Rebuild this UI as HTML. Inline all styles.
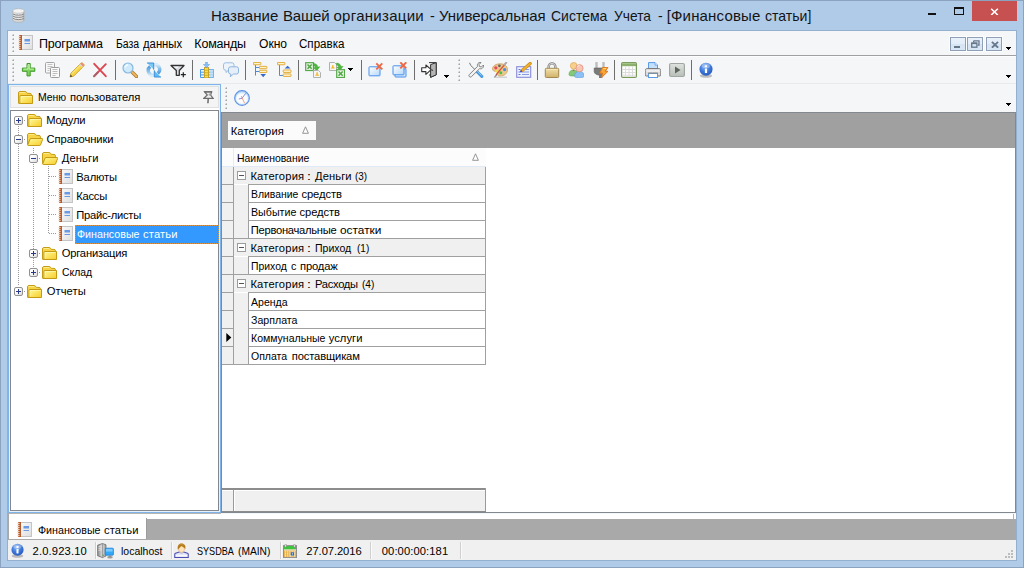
<!DOCTYPE html>
<html>
<head>
<meta charset="utf-8">
<title>USU</title>
<style>
*{box-sizing:border-box;margin:0;padding:0}
html,body{width:1024px;height:568px;overflow:hidden}
body{background:#afcbe8;font-family:"Liberation Sans",sans-serif;font-size:11px;color:#000;position:relative}
.abs{position:absolute;display:block}
.t{position:absolute;white-space:nowrap;line-height:1}
</style>
</head>
<body>
<div class="abs" style="left:0px;top:0px;width:1024px;height:568px;background:#afcbe8;border:1px solid #8ba3bf;"></div>
<div class="abs" style="left:7px;top:30px;width:1010px;height:531px;background:#94b0d0;"></div>
<div class="abs" style="left:8px;top:31px;width:1008px;height:529px;background:#f5f6f7;"></div>
<div class="t" style="left:210.90px;top:7.90px;font-size:15px;letter-spacing:0.059px;color:#141414;">Название</div>
<div class="t" style="left:283.00px;top:7.90px;font-size:15px;letter-spacing:-0.131px;color:#141414;">Вашей</div>
<div class="t" style="left:333.50px;top:7.90px;font-size:15px;letter-spacing:0.278px;color:#141414;">организации</div>
<div class="t" style="left:430.00px;top:7.90px;font-size:15px;letter-spacing:0.000px;color:#141414;transform:scaleX(0.9600);transform-origin:0 0;">-</div>
<div class="t" style="left:439.00px;top:7.90px;font-size:15px;letter-spacing:-0.037px;color:#141414;">Универсальная</div>
<div class="t" style="left:551.40px;top:7.90px;font-size:15px;letter-spacing:0.000px;color:#141414;transform:scaleX(0.9318);transform-origin:0 0;">Система</div>
<div class="t" style="left:613.50px;top:7.90px;font-size:15px;letter-spacing:0.000px;color:#141414;transform:scaleX(0.9195);transform-origin:0 0;">Учета</div>
<div class="t" style="left:657.60px;top:7.90px;font-size:15px;letter-spacing:0.000px;color:#141414;transform:scaleX(0.9400);transform-origin:0 0;">-</div>
<div class="t" style="left:666.70px;top:7.90px;font-size:15px;letter-spacing:0.168px;color:#141414;">[Финансовые</div>
<div class="t" style="left:765.40px;top:7.90px;font-size:15px;letter-spacing:0.000px;color:#141414;transform:scaleX(0.9375);transform-origin:0 0;">статьи]</div>
<svg class="abs" style="left:12px;top:7.500px" width="13" height="15" viewBox="0 0 13 15"><ellipse cx="6.500" cy="12" rx="5.800" ry="2.300" fill="#d8d8d8" stroke="#a8a8a8" stroke-width=".6"/><rect x=".700" y="3" width="11.600" height="9" fill="#e8e8e8"/><path d="M.700 3v9M12.300 3v9" stroke="#a8a8a8" stroke-width=".6"/><path d="M1 6c2 1.600 9 1.600 11 0M1 8.200c2 1.600 9 1.600 11 0M1 10.400c2 1.600 9 1.600 11 0" stroke="#7c7c7c" stroke-width=".9" fill="none"/><path d="M11.300 4v8.500" stroke="#9a9a9a" stroke-width="1.400" opacity=".6"/><ellipse cx="6.500" cy="3" rx="5.800" ry="2.300" fill="#f4f4f4" stroke="#b0b0b0" stroke-width=".6"/></svg>
<div class="abs" style="left:972px;top:1px;width:45px;height:20px;background:#c75050;"></div>
<svg class="abs" style="left:990px;top:7.500px" width="9" height="7.800" viewBox="0 0 11 10"><path d="M1.200 1l8.600 8M9.800 1L1.200 9" stroke="#fff" stroke-width="2"/></svg>
<div class="abs" style="left:928px;top:13px;width:8px;height:2px;background:#111;"></div>
<div class="abs" style="left:954px;top:7px;width:10px;height:8px;border:1px solid #111;border-top-width:2px;"></div>
<div class="abs" style="left:8px;top:55px;width:1008px;height:1px;background:#a0a0a0;"></div>
<div class="abs" style="left:8px;top:56px;width:1008px;height:1px;background:#fdfdfd;"></div>
<div class="abs" style="left:8px;top:83px;width:1008px;height:1px;background:#e9eaeb;"></div>
<div class="abs" style="left:13px;top:35px;width:1px;height:1px;background:#a4a4a4;"></div>
<div class="abs" style="left:12px;top:34px;width:1px;height:1px;background:#e6e6e6;"></div>
<div class="abs" style="left:13px;top:34px;width:1px;height:1px;background:#c6c6c6;"></div>
<div class="abs" style="left:12px;top:35px;width:1px;height:1px;background:#c6c6c6;"></div>
<div class="abs" style="left:13px;top:39px;width:1px;height:1px;background:#a4a4a4;"></div>
<div class="abs" style="left:12px;top:38px;width:1px;height:1px;background:#e6e6e6;"></div>
<div class="abs" style="left:13px;top:38px;width:1px;height:1px;background:#c6c6c6;"></div>
<div class="abs" style="left:12px;top:39px;width:1px;height:1px;background:#c6c6c6;"></div>
<div class="abs" style="left:13px;top:43px;width:1px;height:1px;background:#a4a4a4;"></div>
<div class="abs" style="left:12px;top:42px;width:1px;height:1px;background:#e6e6e6;"></div>
<div class="abs" style="left:13px;top:42px;width:1px;height:1px;background:#c6c6c6;"></div>
<div class="abs" style="left:12px;top:43px;width:1px;height:1px;background:#c6c6c6;"></div>
<div class="abs" style="left:13px;top:47px;width:1px;height:1px;background:#a4a4a4;"></div>
<div class="abs" style="left:12px;top:46px;width:1px;height:1px;background:#e6e6e6;"></div>
<div class="abs" style="left:13px;top:46px;width:1px;height:1px;background:#c6c6c6;"></div>
<div class="abs" style="left:12px;top:47px;width:1px;height:1px;background:#c6c6c6;"></div>
<div class="abs" style="left:13px;top:51px;width:1px;height:1px;background:#a4a4a4;"></div>
<div class="abs" style="left:12px;top:50px;width:1px;height:1px;background:#e6e6e6;"></div>
<div class="abs" style="left:13px;top:50px;width:1px;height:1px;background:#c6c6c6;"></div>
<div class="abs" style="left:12px;top:51px;width:1px;height:1px;background:#c6c6c6;"></div>
<svg class="abs" style="left:18px;top:35px" width="15" height="15" viewBox="0 0 15 15"><defs><linearGradient id="dg" x1="0" y1="0" x2="1" y2="1"><stop offset="0" stop-color="#fafafa"/><stop offset="1" stop-color="#dedede"/></linearGradient></defs><rect x="3.500" y=".500" width="11" height="14" fill="url(#dg)" stroke="#c4c4c4"/><rect x="1.200" y="0" width="2.600" height="15" fill="#c2602c"/><path d="M3.300 0v15" stroke="#a84c1c" stroke-width=".7"/><path d="M.2 1.500h2.400M.2 3.500h2.400M.2 5.500h2.400M.2 7.500h2.400M.2 9.500h2.400M.2 11.500h2.400M.2 13.500h2.400" stroke="#f0dccc" stroke-width=".9"/><rect x="6.500" y="4" width="5.500" height="2.500" fill="#6a9ae4"/><rect x="6.500" y="8" width="5.500" height="1" fill="#6a9ae4"/></svg>
<div class="t" style="left:39.00px;top:38.42px;font-size:12.5px;letter-spacing:-0.192px;color:#000;">Программа</div>
<div class="t" style="left:115.56px;top:38.42px;font-size:12.5px;letter-spacing:0.000px;color:#000;transform:scaleX(0.8375);transform-origin:0 0;">База</div>
<div class="t" style="left:143.00px;top:38.42px;font-size:12.5px;letter-spacing:0.000px;color:#000;transform:scaleX(0.9038);transform-origin:0 0;">данных</div>
<div class="t" style="left:194.30px;top:38.42px;font-size:12.5px;letter-spacing:-0.196px;color:#000;">Команды</div>
<div class="t" style="left:258.60px;top:38.42px;font-size:12.5px;letter-spacing:0.000px;color:#000;transform:scaleX(0.9658);transform-origin:0 0;">Окно</div>
<div class="t" style="left:299.30px;top:38.42px;font-size:12.5px;letter-spacing:0.000px;color:#000;transform:scaleX(0.9270);transform-origin:0 0;">Справка</div>
<div class="abs" style="left:950px;top:37px;width:16px;height:14px;background:#dbe8f5;border:1px solid #8fa0b6;background:linear-gradient(#e9f1fa 0,#e3edf8 50%,#d6e4f4 50%,#d9e6f5 100%);box-shadow:0 0 0 1px #fcfdfe;"></div>
<div class="abs" style="left:967px;top:37px;width:16px;height:14px;background:#dbe8f5;border:1px solid #8fa0b6;background:linear-gradient(#e9f1fa 0,#e3edf8 50%,#d6e4f4 50%,#d9e6f5 100%);box-shadow:0 0 0 1px #fcfdfe;"></div>
<div class="abs" style="left:986px;top:37px;width:16px;height:14px;background:#dbe8f5;border:1px solid #8fa0b6;background:linear-gradient(#e9f1fa 0,#e3edf8 50%,#d6e4f4 50%,#d9e6f5 100%);box-shadow:0 0 0 1px #fcfdfe;"></div>
<div class="abs" style="left:954px;top:46px;width:6px;height:2px;background:#66778a;"></div>
<svg class="abs" style="left:971px;top:40px" width="9" height="8" viewBox="0 0 9 8"><path d="M2.600 .800h5.400v4.300h-1.200M2.600 .800v1.500" stroke="#66778a" stroke-width="1.300" fill="none"/><rect x=".700" y="3" width="5.200" height="4.200" fill="none" stroke="#66778a" stroke-width="1.300"/><path d="M.7 3.400h5.200" stroke="#66778a" stroke-width="1.400"/></svg>
<svg class="abs" style="left:990.500px;top:40.500px" width="8" height="7.500" viewBox="0 0 9 8"><path d="M1 .700l7 6.600M8 .700L1 7.300" stroke="#66778a" stroke-width="2.100"/></svg>
<div class="abs" style="left:1006px;top:47px;width:5px;height:1px;background:#000;"></div>
<div class="abs" style="left:1007px;top:48px;width:3px;height:1px;background:#000;"></div>
<div class="abs" style="left:1008px;top:49px;width:1px;height:1px;background:#000;"></div>
<div class="abs" style="left:13px;top:60px;width:1px;height:1px;background:#a4a4a4;"></div>
<div class="abs" style="left:12px;top:59px;width:1px;height:1px;background:#e6e6e6;"></div>
<div class="abs" style="left:13px;top:59px;width:1px;height:1px;background:#c6c6c6;"></div>
<div class="abs" style="left:12px;top:60px;width:1px;height:1px;background:#c6c6c6;"></div>
<div class="abs" style="left:13px;top:64px;width:1px;height:1px;background:#a4a4a4;"></div>
<div class="abs" style="left:12px;top:63px;width:1px;height:1px;background:#e6e6e6;"></div>
<div class="abs" style="left:13px;top:63px;width:1px;height:1px;background:#c6c6c6;"></div>
<div class="abs" style="left:12px;top:64px;width:1px;height:1px;background:#c6c6c6;"></div>
<div class="abs" style="left:13px;top:68px;width:1px;height:1px;background:#a4a4a4;"></div>
<div class="abs" style="left:12px;top:67px;width:1px;height:1px;background:#e6e6e6;"></div>
<div class="abs" style="left:13px;top:67px;width:1px;height:1px;background:#c6c6c6;"></div>
<div class="abs" style="left:12px;top:68px;width:1px;height:1px;background:#c6c6c6;"></div>
<div class="abs" style="left:13px;top:72px;width:1px;height:1px;background:#a4a4a4;"></div>
<div class="abs" style="left:12px;top:71px;width:1px;height:1px;background:#e6e6e6;"></div>
<div class="abs" style="left:13px;top:71px;width:1px;height:1px;background:#c6c6c6;"></div>
<div class="abs" style="left:12px;top:72px;width:1px;height:1px;background:#c6c6c6;"></div>
<div class="abs" style="left:13px;top:76px;width:1px;height:1px;background:#a4a4a4;"></div>
<div class="abs" style="left:12px;top:75px;width:1px;height:1px;background:#e6e6e6;"></div>
<div class="abs" style="left:13px;top:75px;width:1px;height:1px;background:#c6c6c6;"></div>
<div class="abs" style="left:12px;top:76px;width:1px;height:1px;background:#c6c6c6;"></div>
<div class="abs" style="left:13px;top:80px;width:1px;height:1px;background:#a4a4a4;"></div>
<div class="abs" style="left:12px;top:79px;width:1px;height:1px;background:#e6e6e6;"></div>
<div class="abs" style="left:13px;top:79px;width:1px;height:1px;background:#c6c6c6;"></div>
<div class="abs" style="left:12px;top:80px;width:1px;height:1px;background:#c6c6c6;"></div>
<svg class="abs" style="left:21px;top:62px" width="16" height="16" viewBox="0 0 16 16"><path d="M6 1.500h3.200v4.600h4.600v3.200H9.200v4.600H6V9.300H1.400V6.100H6z" fill="#7fd35c" stroke="#3d9a2a" stroke-width="1" stroke-linejoin="round"/><path d="M7 2.500h1.200v4.600h4.600M2.500 7.100h4.500v-4" stroke="#c4f2ac" stroke-width="1" fill="none"/></svg>
<svg class="abs" style="left:45px;top:62px" width="16" height="16" viewBox="0 0 16 16"><rect x=".500" y=".500" width="9" height="10.500" rx="1" fill="#f8f8f8" stroke="#a4a4a4"/><path d="M2.500 2.500h5M2.500 4.500h5M2.500 6.500h3M2.500 8.500h2" stroke="#bcbcbc" stroke-width=".9"/><rect x="5.500" y="5.500" width="9" height="10" rx="1" fill="#fafafa" stroke="#9c9c9c"/><path d="M7.500 7.500h5M7.500 9.500h5M7.500 11.500h5M7.500 13.500h3" stroke="#b4b4b4" stroke-width=".9"/></svg>
<svg class="abs" style="left:69px;top:62px" width="16" height="16" viewBox="0 0 16 16"><path d="M1 15l1-3.8L11.8 1.3c.6-.6 1.4-.6 2 0l.9.9c.6.6.6 1.4 0 2L4.8 14z" fill="#f7d548" stroke="#c9a227" stroke-width=".9"/><path d="M3 11.5L12 2.5" stroke="#fff0a0" stroke-width="1"/><path d="M11.3 1.8l2.9 2.9 .6-.6c.5-.6.5-1.3 0-1.9l-.9-.9c-.6-.5-1.3-.5-1.9 0z" fill="#f08a8a"/><path d="M10.6 2.5l2.9 2.9" stroke="#d8d8d8" stroke-width="1.2"/><path d="M1 15l.6-2.4 1.8 1.8z" fill="#444"/></svg>
<svg class="abs" style="left:92px;top:62px" width="16" height="16" viewBox="0 0 16 16"><path d="M2.200 1.800L13.800 14.200M13.800 2.200L2.200 14.200" stroke="#dc4652" stroke-width="1.900" stroke-linecap="round"/><path d="M2.200 14.200l3.500-3.700" stroke="#a8606a" stroke-width="1.900" stroke-linecap="round"/></svg>
<svg class="abs" style="left:122px;top:62px" width="16" height="16" viewBox="0 0 16 16"><path d="M9.5 9.5L14.5 14.5" stroke="#b07830" stroke-width="3.4" stroke-linecap="round"/><path d="M10.2 10.2L14.4 14.4" stroke="#f0b860" stroke-width="1.8" stroke-linecap="round"/><circle cx="6" cy="6" r="5" fill="#cfeafa" stroke="#86b8e0" stroke-width="1.2"/><path d="M3 5.5a3.2 3.2 0 0 1 3-2.7" stroke="#fff" stroke-width="1.3" fill="none"/></svg>
<svg class="abs" style="left:146px;top:62px" width="16" height="16" viewBox="0 0 16 16"><defs><linearGradient id="rf1" x1="0" y1="1" x2="0" y2="0"><stop offset="0" stop-color="#d8ecfa"/><stop offset=".45" stop-color="#8cc2ec"/><stop offset="1" stop-color="#4f9bdc"/></linearGradient><linearGradient id="rf2" x1="0" y1="0" x2="0" y2="1"><stop offset="0" stop-color="#d8ecfa"/><stop offset=".45" stop-color="#8cc2ec"/><stop offset="1" stop-color="#4f9bdc"/></linearGradient></defs><path d="M8 13.400A4.900 4.900 0 0 1 4.200 4.700" fill="none" stroke="url(#rf1)" stroke-width="3.400"/><path d="M8 2.600A4.900 4.900 0 0 1 11.800 11.300" fill="none" stroke="url(#rf2)" stroke-width="3.400"/><path d="M1.200 1H7.700V7.500Z" fill="#78c8f8"/><path d="M1 1H7.700V7.600" fill="none" stroke="#3f8fd6" stroke-width="1"/><path d="M14.800 15H8.300V8.500Z" fill="#5cbcf6"/><path d="M15 15H8.300V8.400" fill="none" stroke="#3f8fd6" stroke-width="1"/></svg>
<svg class="abs" style="left:170px;top:62px" width="16" height="16" viewBox="0 0 16 16"><path d="M1 3.5h13L9.3 8.5v4.8H6.3V8.5z" fill="#d8dde2" stroke="#333" stroke-width="1.3" stroke-linejoin="round"/><path d="M3 4.5h6l-2 2z" fill="#fff" opacity=".7"/><path d="M13.3 10.2v5M10.8 12.7h5" stroke="#222" stroke-width="1.2"/></svg>
<svg class="abs" style="left:199px;top:62px" width="16" height="16" viewBox="0 0 16 16"><path d="M1.5 7.5h13v8h-13zM1.5 10.2h13M1.5 12.9h13" fill="#eaf4ff" stroke="#4a9ae8"/><rect x="10.5" y="7.5" width="4" height="8" fill="#b8dcf8" opacity=".8"/><rect x="5.5" y="5.5" width="4" height="10.4" fill="#f8e048" stroke="#c9a227"/><path d="M5.5 8.2h4M5.5 10.8h4M5.5 13.4h4" stroke="#c9a227" stroke-width=".8"/><path d="M6.6 0h1.8v2.5h2.2L7.5 5.5 4.4 2.5h2.2z" fill="#8cc0f0" stroke="#5a9ae0" stroke-width=".5"/></svg>
<svg class="abs" style="left:223px;top:62px" width="16" height="16" viewBox="0 0 16 16"><path d="M2.5.8h6.5a2 2 0 0 1 2 2v3.4a2 2 0 0 1-2 2H5.5L3 10.5V8.2H2.5a2 2 0 0 1-2-2V2.8a2 2 0 0 1 2-2z" fill="#eef4fb" stroke="#9bbde2" stroke-width="1"/><path d="M7.5 4.8h6a2 2 0 0 1 2 2v3.2a2 2 0 0 1-2 2H10.5L7.2 14.8l.8-2.8H7.5a2 2 0 0 1-2-2V6.8a2 2 0 0 1 2-2z" fill="#e6eef9" stroke="#8fb4de" stroke-width="1"/></svg>
<svg class="abs" style="left:253px;top:62px" width="16" height="16" viewBox="0 0 16 16"><path d="M2.500 3v10.500M2.500 5.500h4M2.500 9.500h4" stroke="#4a8ad8" stroke-width="1" fill="none"/><rect x=".450" y=".450" width="7.400" height="2.300" rx=".5" fill="#fff3cc" stroke="#dfa62e" stroke-width=".9"/><rect x="6.450" y="4.350" width="7.400" height="2.300" rx=".5" fill="#fff3cc" stroke="#dfa62e" stroke-width=".9"/><rect x="6.450" y="8.250" width="7.400" height="2.300" rx=".5" fill="#fff3cc" stroke="#dfa62e" stroke-width=".9"/><path d="M7.400 12h5.600l-2.800 3.200z" fill="#3a6ac8"/></svg>
<svg class="abs" style="left:277px;top:62px" width="16" height="16" viewBox="0 0 16 16"><path d="M2.500 3v10.500h3.500" stroke="#4a8ad8" stroke-width="1" fill="none"/><rect x=".450" y=".450" width="7.400" height="2.300" rx=".5" fill="#fff3cc" stroke="#dfa62e" stroke-width=".9"/><path d="M7.600 6.600h6l-3-2.900z" fill="#3a6ac8"/><rect x="6.200" y="7.950" width="7.800" height="2.500" rx=".5" fill="#fff3cc" stroke="#dfa62e" stroke-width=".9"/><rect x="6.200" y="11.950" width="7.800" height="2.500" rx=".5" fill="#fff3cc" stroke="#dfa62e" stroke-width=".9"/></svg>
<svg class="abs" style="left:305px;top:62px" width="16" height="16" viewBox="0 0 16 16"><rect x=".7" y=".7" width="7.8" height="7.8" fill="#eaf6e6" stroke="#55a84a" stroke-width="1.2"/><path d="M2.5 2.5l4.2 4.2M6.7 2.5L2.5 6.7" stroke="#55a84a" stroke-width="1.6"/><path d="M8.5 1.5c2.5 0 4 1.5 4.3 3.5l2-.3-3 4-3.4-3 2 -.3c-.3-1-1-1.7-2.4-1.9z" fill="#4cb83c" stroke="#3a9a2c" stroke-width=".4"/><path d="M8.5 8.5h5l2 2V15.5h-7z" fill="#f6f6f6" stroke="#b0b0b0"/><path d="M10 13.8h4.2l-.8-1.4h-.6v-1.6a.7.7 0 0 0-1.4 0v1.6h-.6z" fill="#f2b820"/></svg>
<svg class="abs" style="left:329px;top:62px" width="16" height="16" viewBox="0 0 16 16"><path d="M.5.5h5l2 2V8.5h-7z" fill="#f6f6f6" stroke="#b0b0b0"/><path d="M1.7 6.6h4.2l-.8-1.4h-.6V3.6a.7.7 0 0 0-1.4 0v1.6h-.6z" fill="#f2b820"/><path d="M7.5 1c2.5 0 4.2 1.5 4.6 3.6l2-.3-3 4-3.4-3 2-.3c-.3-1-1-1.9-2.2-2.1z" fill="#4cb83c" stroke="#3a9a2c" stroke-width=".4"/><rect x="7.7" y="7.7" width="7.8" height="7.8" fill="#eaf6e6" stroke="#55a84a" stroke-width="1.2"/><path d="M9.5 9.5l4.2 4.2M13.7 9.5l-4.2 4.2" stroke="#55a84a" stroke-width="1.6"/></svg>
<svg class="abs" style="left:368px;top:62px" width="16" height="16" viewBox="0 0 16 16"><defs><linearGradient id="wg" x1="0" y1="0" x2="1" y2="1"><stop offset="0" stop-color="#fff"/><stop offset="1" stop-color="#b4d8fa"/></linearGradient></defs><rect x="1" y="4.800" width="11" height="9" rx=".6" fill="url(#wg)" stroke="#4890ea" stroke-width="1"/><path d="M8.3 1.3l6 6M14.3 1.3l-6 6" stroke="#ea6a48" stroke-width="1.9"/></svg>
<svg class="abs" style="left:392px;top:62px" width="16" height="16" viewBox="0 0 16 16"><rect x="3" y="7" width="11" height="8" rx=".6" fill="#d4e8fc" stroke="#4890ea" stroke-width="1"/><rect x="1" y="3.800" width="11" height="9" rx=".6" fill="url(#wg)" stroke="#4890ea" stroke-width="1"/><path d="M8.3.3l6 6M14.3.3l-6 6" stroke="#ea6a48" stroke-width="1.9"/></svg>
<svg class="abs" style="left:421px;top:62px" width="16" height="16" viewBox="0 0 16 16"><path d="M8 .6h7.2v12.2L9.6 15.3V13H8" fill="#f4f4f4" stroke="#333" stroke-width="1"/><path d="M9.6 2.6L15.2.6v12.2L9.6 15.3z" fill="#b4b4b4" stroke="#333" stroke-width="1"/><path d="M.7 5.8h4.2V3l5.3 4.7-5.3 4.7V9.6H.7z" fill="#fff" stroke="#333" stroke-width="1.1" stroke-linejoin="round"/><circle cx="11.3" cy="8.2" r=".8" fill="#444"/></svg>
<svg class="abs" style="left:468px;top:62px" width="16" height="16" viewBox="0 0 16 16"><path d="M1.5.8L2.8 3.5 9 9.6" stroke="#777" stroke-width="1" fill="none"/><path d="M8.6 9.2l5.2 5.2" stroke="#4a9ae0" stroke-width="3" stroke-linecap="round"/><path d="M9 9l4.6 4.6" stroke="#8cc8f4" stroke-width="1"/><path d="M1.4 14.6c-.7-.7-.7-1.4 0-2.1L9.6 4.3c-.6-1.5 0-2.8 1.2-3.5 .8-.4 1.6-.4 2.2-.2L11 2.6l.5 1.9 1.9.5 2-2c.3.7.2 1.6-.3 2.4-.8 1.200-2.100 1.700-3.400 1.200L3.500 14.600c-.7.7-1.400.7-2.100 0z" fill="#f2f2f2" stroke="#777" stroke-width=".9"/></svg>
<svg class="abs" style="left:492px;top:62px" width="16" height="16" viewBox="0 0 16 16"><path d="M8.200 1.800c4.300 0 7.300 2.300 7.300 5.800 0 3.800-3.200 6.400-7.500 6.400-1.600 0-2.400-.6-2.400-1.500 0-.9.600-1.200.600-1.900 0-.7-.7-1.100-1.900-1.100C2 9.500.5 8.600.5 6.800.5 4 3.800 1.800 8.200 1.800z" fill="#ecc88c" stroke="#c8a060" stroke-width=".8"/><circle cx="3.800" cy="5.800" r="1.600" fill="#ea4a5c"/><circle cx="7.400" cy="3.800" r="1.400" fill="#666"/><circle cx="12.600" cy="7.600" r="1.600" fill="#4a8ae0"/><circle cx="8.800" cy="10.800" r="1.500" fill="#4ac04a"/><circle cx="4.600" cy="9.300" r="1.300" fill="#f0e040"/><path d="M14.500.300L4 12.800" stroke="#d8503a" stroke-width="1.300"/><path d="M15 .2l-3.500 3" stroke="#b0b0b0" stroke-width="1.600"/><path d="M4.300 12.400L1.800 15.500l1-.2 2.200-2.300z" fill="#444"/><path d="M2 15.200h13" stroke="#b8b8b8" stroke-width=".8"/></svg>
<svg class="abs" style="left:516px;top:62px" width="16" height="16" viewBox="0 0 16 16"><rect x=".7" y="4.700" width="14" height="10.600" fill="#ecf2ff" stroke="#8a8ad8" stroke-width="1.100"/><path d="M2.500 7.500h2M2.500 10h2M2.500 12.500h2" stroke="#6a7ad0" stroke-width="1"/><path d="M6 10h7M6 12.500h7M9.500 7.500h3.500" stroke="#8a9ae0" stroke-width="1"/><path d="M6 8.600L14.200 1.500" stroke="#c88a18" stroke-width="3.200" stroke-linecap="round"/><path d="M6.500 8.200L14 1.700" stroke="#f0b030" stroke-width="1.800" stroke-linecap="round"/><path d="M4.600 9.800l1-.4.600-1.400z" fill="#2a3ae0"/><circle cx="5" cy="9.400" r=".9" fill="#3040e0"/></svg>
<svg class="abs" style="left:544px;top:62px" width="16" height="16" viewBox="0 0 16 16"><path d="M4.600 8V4.800a3.400 3.400 0 0 1 6.800 0V8" fill="none" stroke="#868686" stroke-width="2.400"/><path d="M4.600 8V4.800a3.400 3.400 0 0 1 6.800 0V8" fill="none" stroke="#dedede" stroke-width=".9"/><defs><linearGradient id="lk" x1="0" y1="0" x2="0" y2="1"><stop offset="0" stop-color="#f2e0a8"/><stop offset="1" stop-color="#d2b26a"/></linearGradient></defs><rect x="1.300" y="6.300" width="13.400" height="9.200" rx="1" fill="url(#lk)" stroke="#a08850" stroke-width="1"/><path d="M2.300 7.400h11.400" stroke="#f8ecc4" stroke-width=".8"/></svg>
<svg class="abs" style="left:568px;top:62px" width="16" height="16" viewBox="0 0 16 16"><path d="M1 12.500c0-3 1.800-4.500 4.500-4.500s4.500 1.500 4.500 4.500c0 1-1 1.500-4.500 1.500S1 13.500 1 12.500z" fill="#84c878" stroke="#5aa850" stroke-width=".6"/><path d="M4.300 7.800l1.200 1.500 1.200-1.500z" fill="#e04a4a"/><circle cx="5.700" cy="3.800" r="3.300" fill="#f6d08c" stroke="#e0a850" stroke-width=".7"/><path d="M6.500 14c0-3 2-4.600 5-4.600s4.500 1.600 4.500 4.600c0 1.200-1.200 1.800-4.800 1.800S6.500 15.200 6.500 14z" fill="#8cc0f4" stroke="#5a9ae0" stroke-width=".6"/><circle cx="11.500" cy="6.200" r="3.600" fill="#f8c4b4" stroke="#e08a78" stroke-width=".7"/><path d="M9.500 5a2 2 0 0 1 2-1.600" stroke="#fff" stroke-width="1" fill="none" opacity=".7"/></svg>
<svg class="abs" style="left:593px;top:62px" width="16" height="16" viewBox="0 0 16 16"><path d="M3.500.500v6M10.500.500v6" stroke="#d8d8d8" stroke-width="2.200" stroke-linecap="round"/><path d="M3.500.500v6M10.500.500v6" stroke="#a0a0a0" stroke-width="2.200" stroke-linecap="round" fill="none" opacity=".5"/><path d="M1.200 6h11.600v3.500c0 2-1.500 3.500-3.800 3.700V16H6.500v-2.800C3.500 13 1.200 11.500 1.200 9.500z" fill="#7a7a7a" stroke="#5a5a5a" stroke-width=".6"/><path d="M9.500 5.500h5.500l-2.800 3.800h2.800L8.200 16l1.500-4.800H6.800z" fill="#f8a830" stroke="#e07820" stroke-width=".9" stroke-linejoin="round"/><path d="M10.200 6.500h2.800" stroke="#fde090" stroke-width=".8"/></svg>
<svg class="abs" style="left:621px;top:62px" width="16" height="16" viewBox="0 0 16 16"><rect x=".600" y=".600" width="14.800" height="14.800" rx="1.200" fill="#fff" stroke="#7a9a5a" stroke-width="1.200"/><path d="M1 1.200h14v3H1z" fill="#8db06c"/><path d="M1.200 1.400h13.600" stroke="#a8c88a" stroke-width=".8"/><path d="M1.200 7.500h13.600M1.200 10.500h13.600M1.200 13.200h13.600M4.500 4.500v10.500M8 4.500v10.500M11.500 4.500v10.500" stroke="#dcdcdc" stroke-width="1"/></svg>
<svg class="abs" style="left:645px;top:62px" width="16" height="16" viewBox="0 0 16 16"><path d="M3.500.600h6.500l2.500 2.500V8h-9z" fill="#c4e0fa" stroke="#5a9ae8" stroke-width="1"/><path d="M10 .600v2.500h2.500" fill="#eaf4ff" stroke="#5a9ae8" stroke-width=".8"/><path d="M2.200 6.500h11.600c1.200 0 2 .8 2 2V13c0 .6-.4 1-1 1H1.200c-.6 0-1-.4-1-1V8.500c0-1.200.8-2 2-2z" fill="#dcdcdc" stroke="#7a7a7a" stroke-width="1"/><path d="M1.500 9h13" stroke="#f8f8f8" stroke-width="1.200"/><rect x="3.500" y="11.500" width="9" height="4" fill="#fff" stroke="#5a9ae8" stroke-width="1"/><rect x="3.200" y="10.500" width="9.600" height="1.200" fill="#8a8a8a"/></svg>
<svg class="abs" style="left:669px;top:62px" width="16" height="16" viewBox="0 0 16 16"><defs><linearGradient id="pg" x1="0" y1="0" x2="0" y2="1"><stop offset="0" stop-color="#dfe3df"/><stop offset="1" stop-color="#b8beb8"/></linearGradient></defs><rect x=".600" y="1.500" width="14.800" height="13" rx="1.500" fill="url(#pg)" stroke="#a0a6a0" stroke-width="1.200"/><path d="M6 4.500l5.500 3.500L6 11.500z" fill="#5c665c"/></svg>
<svg class="abs" style="left:698px;top:62px" width="16" height="16" viewBox="0 0 16 16"><defs><radialGradient id="ig" cx=".42" cy=".3" r=".8"><stop offset="0" stop-color="#8cb8f6"/><stop offset=".5" stop-color="#3d78da"/><stop offset="1" stop-color="#2252b4"/></radialGradient></defs><ellipse cx="8" cy="13.800" rx="6.200" ry="1.900" fill="#8e8e8e" opacity=".55"/><circle cx="8" cy="7.200" r="6.500" fill="url(#ig)"/><ellipse cx="8" cy="3.700" rx="4.400" ry="2.500" fill="#fff" opacity=".28"/><rect x="6.900" y="3.300" width="2.200" height="2" rx=".4" fill="#fff"/><rect x="6.900" y="6.500" width="2.200" height="4.600" rx=".4" fill="#fff"/></svg>
<div class="abs" style="left:115px;top:60px;width:1px;height:20px;background:#6e6e6e;"></div>
<div class="abs" style="left:192px;top:60px;width:1px;height:20px;background:#6e6e6e;"></div>
<div class="abs" style="left:245px;top:60px;width:1px;height:20px;background:#6e6e6e;"></div>
<div class="abs" style="left:298px;top:60px;width:1px;height:20px;background:#6e6e6e;"></div>
<div class="abs" style="left:361px;top:60px;width:1px;height:20px;background:#6e6e6e;"></div>
<div class="abs" style="left:414px;top:60px;width:1px;height:20px;background:#6e6e6e;"></div>
<div class="abs" style="left:537px;top:60px;width:1px;height:20px;background:#6e6e6e;"></div>
<div class="abs" style="left:614px;top:60px;width:1px;height:20px;background:#6e6e6e;"></div>
<div class="abs" style="left:691px;top:60px;width:1px;height:20px;background:#6e6e6e;"></div>
<div class="abs" style="left:348px;top:68px;width:5px;height:1px;background:#000;"></div>
<div class="abs" style="left:349px;top:69px;width:3px;height:1px;background:#000;"></div>
<div class="abs" style="left:350px;top:70px;width:1px;height:1px;background:#000;"></div>
<div class="abs" style="left:444px;top:75px;width:5px;height:1px;background:#000;"></div>
<div class="abs" style="left:445px;top:76px;width:3px;height:1px;background:#000;"></div>
<div class="abs" style="left:446px;top:77px;width:1px;height:1px;background:#000;"></div>
<div class="abs" style="left:1006px;top:75px;width:5px;height:1px;background:#000;"></div>
<div class="abs" style="left:1007px;top:76px;width:3px;height:1px;background:#000;"></div>
<div class="abs" style="left:1008px;top:77px;width:1px;height:1px;background:#000;"></div>
<div class="abs" style="left:459px;top:60px;width:1px;height:1px;background:#a4a4a4;"></div>
<div class="abs" style="left:458px;top:59px;width:1px;height:1px;background:#e6e6e6;"></div>
<div class="abs" style="left:459px;top:59px;width:1px;height:1px;background:#c6c6c6;"></div>
<div class="abs" style="left:458px;top:60px;width:1px;height:1px;background:#c6c6c6;"></div>
<div class="abs" style="left:459px;top:64px;width:1px;height:1px;background:#a4a4a4;"></div>
<div class="abs" style="left:458px;top:63px;width:1px;height:1px;background:#e6e6e6;"></div>
<div class="abs" style="left:459px;top:63px;width:1px;height:1px;background:#c6c6c6;"></div>
<div class="abs" style="left:458px;top:64px;width:1px;height:1px;background:#c6c6c6;"></div>
<div class="abs" style="left:459px;top:68px;width:1px;height:1px;background:#a4a4a4;"></div>
<div class="abs" style="left:458px;top:67px;width:1px;height:1px;background:#e6e6e6;"></div>
<div class="abs" style="left:459px;top:67px;width:1px;height:1px;background:#c6c6c6;"></div>
<div class="abs" style="left:458px;top:68px;width:1px;height:1px;background:#c6c6c6;"></div>
<div class="abs" style="left:459px;top:72px;width:1px;height:1px;background:#a4a4a4;"></div>
<div class="abs" style="left:458px;top:71px;width:1px;height:1px;background:#e6e6e6;"></div>
<div class="abs" style="left:459px;top:71px;width:1px;height:1px;background:#c6c6c6;"></div>
<div class="abs" style="left:458px;top:72px;width:1px;height:1px;background:#c6c6c6;"></div>
<div class="abs" style="left:459px;top:76px;width:1px;height:1px;background:#a4a4a4;"></div>
<div class="abs" style="left:458px;top:75px;width:1px;height:1px;background:#e6e6e6;"></div>
<div class="abs" style="left:459px;top:75px;width:1px;height:1px;background:#c6c6c6;"></div>
<div class="abs" style="left:458px;top:76px;width:1px;height:1px;background:#c6c6c6;"></div>
<div class="abs" style="left:459px;top:80px;width:1px;height:1px;background:#a4a4a4;"></div>
<div class="abs" style="left:458px;top:79px;width:1px;height:1px;background:#e6e6e6;"></div>
<div class="abs" style="left:459px;top:79px;width:1px;height:1px;background:#c6c6c6;"></div>
<div class="abs" style="left:458px;top:80px;width:1px;height:1px;background:#c6c6c6;"></div>
<div class="abs" style="left:8px;top:84px;width:213px;height:429px;background:#e6f1fc;border:1px solid #7eb4ea;"></div>
<div class="abs" style="left:10px;top:86px;width:209px;height:22px;background:#f4f4f4;border:1px solid #e0e0e0;"></div>
<svg class="abs" style="left:18px;top:91px" width="15" height="13" viewBox="0 0 15 13"><defs><linearGradient id="fg" x1="0" y1="0" x2="1" y2="1"><stop offset="0" stop-color="#fffa98"/><stop offset="1" stop-color="#f6cc28"/></linearGradient></defs><path d="M.5 2Q.5 .5 2 .5H7Q8 .5 8.600 1.300L9.400 2.400H12Q13.400 2.400 13.400 3.800V4.500H14Q14.500 4.500 14.500 5V12Q14.500 12.500 14 12.500H1Q.5 12.500 .5 12Z" fill="#f6d446" stroke="#c49c16" stroke-width="1"/><path d="M1.500 1.500h5.800" stroke="#fdf0a0" stroke-width=".8"/><rect x="2" y="4.500" width="12.500" height="8" rx=".4" fill="url(#fg)" stroke="#c49a14" stroke-width="1"/><path d="M3 5.500h10.500M3 5.500v6" stroke="#fffcc0" stroke-width=".8" fill="none" opacity=".8"/></svg>
<div class="t" style="left:37.70px;top:91.52px;font-size:11.2px;letter-spacing:0.000px;color:#000;transform:scaleX(0.9315);transform-origin:0 0;">Меню</div>
<div class="t" style="left:69.90px;top:91.52px;font-size:11.2px;letter-spacing:-0.044px;color:#000;">пользователя</div>
<svg class="abs" style="left:203px;top:91px" width="11" height="13" viewBox="0 0 11 13"><path d="M1.600 .800H8.700L7.600 4 10.100 7.300H.900L4.300 4Z" fill="#eeeeee" stroke="#6c6c6c" stroke-width="1.200" stroke-linejoin="miter"/><path d="M1.200 .800H9" stroke="#6c6c6c" stroke-width="1.300"/><path d="M5.200 7.500L4.900 12.300" stroke="#6c6c6c" stroke-width="1.500"/><circle cx="6.600" cy="3.600" r="1.100" fill="#a4a4a4"/></svg>
<div class="abs" style="left:10px;top:108px;width:209px;height:2px;background:#fff;"></div>
<div class="abs" style="left:10px;top:110px;width:209px;height:401px;background:#fff;border:1px solid #828790;"></div>
<div class="abs" style="left:8px;top:513px;width:213px;height:1px;background:#b8b4b0;"></div>
<div class="abs" style="left:18px;top:126px;width:1px;height:160px;background-image:repeating-linear-gradient(to bottom,#9a9a9a 0,#9a9a9a 1px,transparent 1px,transparent 2px)"></div>
<div class="abs" style="left:33px;top:148px;width:1px;height:120px;background-image:repeating-linear-gradient(to bottom,#9a9a9a 0,#9a9a9a 1px,transparent 1px,transparent 2px)"></div>
<div class="abs" style="left:48px;top:166px;width:1px;height:68px;background-image:repeating-linear-gradient(to bottom,#9a9a9a 0,#9a9a9a 1px,transparent 1px,transparent 2px)"></div>
<div class="abs" style="left:24px;top:120px;width:1px;height:1px;background-image:repeating-linear-gradient(to right,#9a9a9a 0,#9a9a9a 1px,transparent 1px,transparent 2px)"></div>
<div class="abs" style="left:14px;top:116px;width:9px;height:9px;border:1px solid #919191;border-radius:2px;background:linear-gradient(135deg,#fff 30%,#dcdcdc)"></div>
<div class="abs" style="left:16px;top:120px;width:5px;height:1px;background:#2a3a8c;"></div>
<div class="abs" style="left:18px;top:118px;width:1px;height:5px;background:#2a3a8c;"></div>
<svg class="abs" style="left:27px;top:114px" width="15" height="13" viewBox="0 0 15 13"><defs><linearGradient id="fg" x1="0" y1="0" x2="1" y2="1"><stop offset="0" stop-color="#fffa98"/><stop offset="1" stop-color="#f6cc28"/></linearGradient></defs><path d="M.5 2Q.5 .5 2 .5H7Q8 .5 8.600 1.300L9.400 2.400H12Q13.400 2.400 13.400 3.800V4.500H14Q14.500 4.500 14.500 5V12Q14.500 12.500 14 12.500H1Q.5 12.500 .5 12Z" fill="#f6d446" stroke="#c49c16" stroke-width="1"/><path d="M1.500 1.500h5.800" stroke="#fdf0a0" stroke-width=".8"/><rect x="2" y="4.500" width="12.500" height="8" rx=".4" fill="url(#fg)" stroke="#c49a14" stroke-width="1"/><path d="M3 5.500h10.500M3 5.500v6" stroke="#fffcc0" stroke-width=".8" fill="none" opacity=".8"/></svg>
<div class="t" style="left:46.20px;top:114.52px;font-size:11.2px;letter-spacing:-0.145px;color:#000;">Модули</div>
<div class="abs" style="left:24px;top:139px;width:1px;height:1px;background-image:repeating-linear-gradient(to right,#9a9a9a 0,#9a9a9a 1px,transparent 1px,transparent 2px)"></div>
<div class="abs" style="left:14px;top:135px;width:9px;height:9px;border:1px solid #919191;border-radius:2px;background:linear-gradient(135deg,#fff 30%,#dcdcdc)"></div>
<div class="abs" style="left:16px;top:139px;width:5px;height:1px;background:#2a3a8c;"></div>
<svg class="abs" style="left:27px;top:133px" width="16" height="13" viewBox="0 0 16 13"><path d="M.5 2Q.5 .5 2 .5H7Q8 .5 8.600 1.300L9.400 2.400H12Q13.400 2.400 13.400 3.800V6H3.500L.5 11.500Z" fill="#f6d446" stroke="#c49c16" stroke-width="1"/><path d="M1.500 1.500h5.800" stroke="#fdf0a0" stroke-width=".8"/><path d="M3.800 5.500h11.400c.5 0 .7.300.5.800l-2.200 5.700c-.1.300-.4.500-.7.500H1.200c-.4 0-.6-.3-.4-.7l2.300-5.700c.1-.4.400-.6.700-.6z" fill="url(#fg)" stroke="#c49c16" stroke-width="1"/></svg>
<div class="t" style="left:46.50px;top:133.52px;font-size:11.2px;letter-spacing:-0.073px;color:#000;">Справочники</div>
<div class="abs" style="left:39px;top:158px;width:1px;height:1px;background-image:repeating-linear-gradient(to right,#9a9a9a 0,#9a9a9a 1px,transparent 1px,transparent 2px)"></div>
<div class="abs" style="left:29px;top:154px;width:9px;height:9px;border:1px solid #919191;border-radius:2px;background:linear-gradient(135deg,#fff 30%,#dcdcdc)"></div>
<div class="abs" style="left:31px;top:158px;width:5px;height:1px;background:#2a3a8c;"></div>
<svg class="abs" style="left:42px;top:152px" width="16" height="13" viewBox="0 0 16 13"><path d="M.5 2Q.5 .5 2 .5H7Q8 .5 8.600 1.300L9.400 2.400H12Q13.400 2.400 13.400 3.800V6H3.500L.5 11.500Z" fill="#f6d446" stroke="#c49c16" stroke-width="1"/><path d="M1.500 1.500h5.800" stroke="#fdf0a0" stroke-width=".8"/><path d="M3.800 5.500h11.400c.5 0 .7.300.5.800l-2.200 5.700c-.1.300-.4.500-.7.500H1.200c-.4 0-.6-.3-.4-.7l2.300-5.700c.1-.4.400-.6.700-.6z" fill="url(#fg)" stroke="#c49c16" stroke-width="1"/></svg>
<div class="t" style="left:61.70px;top:152.52px;font-size:11.2px;letter-spacing:0.123px;color:#000;">Деньги</div>
<div class="abs" style="left:49px;top:176px;width:8px;height:1px;background-image:repeating-linear-gradient(to right,#9a9a9a 0,#9a9a9a 1px,transparent 1px,transparent 2px)"></div>
<svg class="abs" style="left:58px;top:169px" width="15" height="15" viewBox="0 0 15 15"><defs><linearGradient id="dg" x1="0" y1="0" x2="1" y2="1"><stop offset="0" stop-color="#fafafa"/><stop offset="1" stop-color="#dedede"/></linearGradient></defs><rect x="3.500" y=".500" width="11" height="14" fill="url(#dg)" stroke="#c4c4c4"/><rect x="1.200" y="0" width="2.600" height="15" fill="#c2602c"/><path d="M3.300 0v15" stroke="#a84c1c" stroke-width=".7"/><path d="M.2 1.500h2.400M.2 3.500h2.400M.2 5.500h2.400M.2 7.500h2.400M.2 9.500h2.400M.2 11.500h2.400M.2 13.500h2.400" stroke="#f0dccc" stroke-width=".9"/><rect x="6.500" y="4" width="5.500" height="2.500" fill="#6a9ae4"/><rect x="6.500" y="8" width="5.500" height="1" fill="#6a9ae4"/></svg>
<div class="t" style="left:76.30px;top:171.52px;font-size:11.2px;letter-spacing:-0.136px;color:#000;">Валюты</div>
<div class="abs" style="left:49px;top:195px;width:8px;height:1px;background-image:repeating-linear-gradient(to right,#9a9a9a 0,#9a9a9a 1px,transparent 1px,transparent 2px)"></div>
<svg class="abs" style="left:58px;top:188px" width="15" height="15" viewBox="0 0 15 15"><defs><linearGradient id="dg" x1="0" y1="0" x2="1" y2="1"><stop offset="0" stop-color="#fafafa"/><stop offset="1" stop-color="#dedede"/></linearGradient></defs><rect x="3.500" y=".500" width="11" height="14" fill="url(#dg)" stroke="#c4c4c4"/><rect x="1.200" y="0" width="2.600" height="15" fill="#c2602c"/><path d="M3.300 0v15" stroke="#a84c1c" stroke-width=".7"/><path d="M.2 1.500h2.400M.2 3.500h2.400M.2 5.500h2.400M.2 7.500h2.400M.2 9.500h2.400M.2 11.500h2.400M.2 13.500h2.400" stroke="#f0dccc" stroke-width=".9"/><rect x="6.500" y="4" width="5.500" height="2.500" fill="#6a9ae4"/><rect x="6.500" y="8" width="5.500" height="1" fill="#6a9ae4"/></svg>
<div class="t" style="left:76.30px;top:190.52px;font-size:11.2px;letter-spacing:-0.257px;color:#000;">Кассы</div>
<div class="abs" style="left:49px;top:214px;width:8px;height:1px;background-image:repeating-linear-gradient(to right,#9a9a9a 0,#9a9a9a 1px,transparent 1px,transparent 2px)"></div>
<svg class="abs" style="left:58px;top:207px" width="15" height="15" viewBox="0 0 15 15"><defs><linearGradient id="dg" x1="0" y1="0" x2="1" y2="1"><stop offset="0" stop-color="#fafafa"/><stop offset="1" stop-color="#dedede"/></linearGradient></defs><rect x="3.500" y=".500" width="11" height="14" fill="url(#dg)" stroke="#c4c4c4"/><rect x="1.200" y="0" width="2.600" height="15" fill="#c2602c"/><path d="M3.300 0v15" stroke="#a84c1c" stroke-width=".7"/><path d="M.2 1.500h2.400M.2 3.500h2.400M.2 5.500h2.400M.2 7.500h2.400M.2 9.500h2.400M.2 11.500h2.400M.2 13.500h2.400" stroke="#f0dccc" stroke-width=".9"/><rect x="6.500" y="4" width="5.500" height="2.500" fill="#6a9ae4"/><rect x="6.500" y="8" width="5.500" height="1" fill="#6a9ae4"/></svg>
<div class="t" style="left:76.30px;top:209.52px;font-size:11.2px;letter-spacing:-0.265px;color:#000;">Прайс-листы</div>
<div class="abs" style="left:49px;top:233px;width:8px;height:1px;background-image:repeating-linear-gradient(to right,#9a9a9a 0,#9a9a9a 1px,transparent 1px,transparent 2px)"></div>
<svg class="abs" style="left:58px;top:226px" width="15" height="15" viewBox="0 0 15 15"><defs><linearGradient id="dg" x1="0" y1="0" x2="1" y2="1"><stop offset="0" stop-color="#fafafa"/><stop offset="1" stop-color="#dedede"/></linearGradient></defs><rect x="3.500" y=".500" width="11" height="14" fill="url(#dg)" stroke="#c4c4c4"/><rect x="1.200" y="0" width="2.600" height="15" fill="#c2602c"/><path d="M3.300 0v15" stroke="#a84c1c" stroke-width=".7"/><path d="M.2 1.500h2.400M.2 3.500h2.400M.2 5.500h2.400M.2 7.500h2.400M.2 9.500h2.400M.2 11.500h2.400M.2 13.500h2.400" stroke="#f0dccc" stroke-width=".9"/><rect x="6.500" y="4" width="5.500" height="2.500" fill="#6a9ae4"/><rect x="6.500" y="8" width="5.500" height="1" fill="#6a9ae4"/></svg>
<div class="abs" style="left:75px;top:225px;width:144px;height:19px;background:#3399ff;border:1px dotted #d4924a;"></div>
<div class="t" style="left:77.20px;top:228.52px;font-size:11.2px;letter-spacing:0.000px;color:#fff;transform:scaleX(0.9547);transform-origin:0 0;">Финансовые</div>
<div class="t" style="left:143.10px;top:228.52px;font-size:11.2px;letter-spacing:0.136px;color:#fff;">статьи</div>
<div class="abs" style="left:39px;top:253px;width:1px;height:1px;background-image:repeating-linear-gradient(to right,#9a9a9a 0,#9a9a9a 1px,transparent 1px,transparent 2px)"></div>
<div class="abs" style="left:29px;top:249px;width:9px;height:9px;border:1px solid #919191;border-radius:2px;background:linear-gradient(135deg,#fff 30%,#dcdcdc)"></div>
<div class="abs" style="left:31px;top:253px;width:5px;height:1px;background:#2a3a8c;"></div>
<div class="abs" style="left:33px;top:251px;width:1px;height:5px;background:#2a3a8c;"></div>
<svg class="abs" style="left:42px;top:247px" width="15" height="13" viewBox="0 0 15 13"><defs><linearGradient id="fg" x1="0" y1="0" x2="1" y2="1"><stop offset="0" stop-color="#fffa98"/><stop offset="1" stop-color="#f6cc28"/></linearGradient></defs><path d="M.5 2Q.5 .5 2 .5H7Q8 .5 8.600 1.300L9.400 2.400H12Q13.400 2.400 13.400 3.800V4.500H14Q14.500 4.500 14.500 5V12Q14.500 12.500 14 12.500H1Q.5 12.500 .5 12Z" fill="#f6d446" stroke="#c49c16" stroke-width="1"/><path d="M1.500 1.500h5.800" stroke="#fdf0a0" stroke-width=".8"/><rect x="2" y="4.500" width="12.500" height="8" rx=".4" fill="url(#fg)" stroke="#c49a14" stroke-width="1"/><path d="M3 5.500h10.500M3 5.500v6" stroke="#fffcc0" stroke-width=".8" fill="none" opacity=".8"/></svg>
<div class="t" style="left:61.70px;top:247.52px;font-size:11.2px;letter-spacing:-0.192px;color:#000;">Организация</div>
<div class="abs" style="left:39px;top:272px;width:1px;height:1px;background-image:repeating-linear-gradient(to right,#9a9a9a 0,#9a9a9a 1px,transparent 1px,transparent 2px)"></div>
<div class="abs" style="left:29px;top:268px;width:9px;height:9px;border:1px solid #919191;border-radius:2px;background:linear-gradient(135deg,#fff 30%,#dcdcdc)"></div>
<div class="abs" style="left:31px;top:272px;width:5px;height:1px;background:#2a3a8c;"></div>
<div class="abs" style="left:33px;top:270px;width:1px;height:5px;background:#2a3a8c;"></div>
<svg class="abs" style="left:42px;top:266px" width="15" height="13" viewBox="0 0 15 13"><defs><linearGradient id="fg" x1="0" y1="0" x2="1" y2="1"><stop offset="0" stop-color="#fffa98"/><stop offset="1" stop-color="#f6cc28"/></linearGradient></defs><path d="M.5 2Q.5 .5 2 .5H7Q8 .5 8.600 1.300L9.400 2.400H12Q13.400 2.400 13.400 3.800V4.500H14Q14.500 4.500 14.500 5V12Q14.500 12.500 14 12.500H1Q.5 12.500 .5 12Z" fill="#f6d446" stroke="#c49c16" stroke-width="1"/><path d="M1.500 1.500h5.800" stroke="#fdf0a0" stroke-width=".8"/><rect x="2" y="4.500" width="12.500" height="8" rx=".4" fill="url(#fg)" stroke="#c49a14" stroke-width="1"/><path d="M3 5.500h10.500M3 5.500v6" stroke="#fffcc0" stroke-width=".8" fill="none" opacity=".8"/></svg>
<div class="t" style="left:61.70px;top:266.52px;font-size:11.2px;letter-spacing:0.000px;color:#000;transform:scaleX(0.9285);transform-origin:0 0;">Склад</div>
<div class="abs" style="left:24px;top:291px;width:1px;height:1px;background-image:repeating-linear-gradient(to right,#9a9a9a 0,#9a9a9a 1px,transparent 1px,transparent 2px)"></div>
<div class="abs" style="left:14px;top:287px;width:9px;height:9px;border:1px solid #919191;border-radius:2px;background:linear-gradient(135deg,#fff 30%,#dcdcdc)"></div>
<div class="abs" style="left:16px;top:291px;width:5px;height:1px;background:#2a3a8c;"></div>
<div class="abs" style="left:18px;top:289px;width:1px;height:5px;background:#2a3a8c;"></div>
<svg class="abs" style="left:27px;top:285px" width="15" height="13" viewBox="0 0 15 13"><defs><linearGradient id="fg" x1="0" y1="0" x2="1" y2="1"><stop offset="0" stop-color="#fffa98"/><stop offset="1" stop-color="#f6cc28"/></linearGradient></defs><path d="M.5 2Q.5 .5 2 .5H7Q8 .5 8.600 1.300L9.400 2.400H12Q13.400 2.400 13.400 3.800V4.500H14Q14.500 4.500 14.500 5V12Q14.500 12.500 14 12.500H1Q.5 12.500 .5 12Z" fill="#f6d446" stroke="#c49c16" stroke-width="1"/><path d="M1.500 1.500h5.800" stroke="#fdf0a0" stroke-width=".8"/><rect x="2" y="4.500" width="12.500" height="8" rx=".4" fill="url(#fg)" stroke="#c49a14" stroke-width="1"/><path d="M3 5.500h10.500M3 5.500v6" stroke="#fffcc0" stroke-width=".8" fill="none" opacity=".8"/></svg>
<div class="t" style="left:46.70px;top:285.52px;font-size:11.2px;letter-spacing:0.094px;color:#000;">Отчеты</div>
<div class="abs" style="left:226px;top:88px;width:1px;height:1px;background:#a4a4a4;"></div>
<div class="abs" style="left:225px;top:87px;width:1px;height:1px;background:#e6e6e6;"></div>
<div class="abs" style="left:226px;top:87px;width:1px;height:1px;background:#c6c6c6;"></div>
<div class="abs" style="left:225px;top:88px;width:1px;height:1px;background:#c6c6c6;"></div>
<div class="abs" style="left:226px;top:92px;width:1px;height:1px;background:#a4a4a4;"></div>
<div class="abs" style="left:225px;top:91px;width:1px;height:1px;background:#e6e6e6;"></div>
<div class="abs" style="left:226px;top:91px;width:1px;height:1px;background:#c6c6c6;"></div>
<div class="abs" style="left:225px;top:92px;width:1px;height:1px;background:#c6c6c6;"></div>
<div class="abs" style="left:226px;top:96px;width:1px;height:1px;background:#a4a4a4;"></div>
<div class="abs" style="left:225px;top:95px;width:1px;height:1px;background:#e6e6e6;"></div>
<div class="abs" style="left:226px;top:95px;width:1px;height:1px;background:#c6c6c6;"></div>
<div class="abs" style="left:225px;top:96px;width:1px;height:1px;background:#c6c6c6;"></div>
<div class="abs" style="left:226px;top:100px;width:1px;height:1px;background:#a4a4a4;"></div>
<div class="abs" style="left:225px;top:99px;width:1px;height:1px;background:#e6e6e6;"></div>
<div class="abs" style="left:226px;top:99px;width:1px;height:1px;background:#c6c6c6;"></div>
<div class="abs" style="left:225px;top:100px;width:1px;height:1px;background:#c6c6c6;"></div>
<div class="abs" style="left:226px;top:104px;width:1px;height:1px;background:#a4a4a4;"></div>
<div class="abs" style="left:225px;top:103px;width:1px;height:1px;background:#e6e6e6;"></div>
<div class="abs" style="left:226px;top:103px;width:1px;height:1px;background:#c6c6c6;"></div>
<div class="abs" style="left:225px;top:104px;width:1px;height:1px;background:#c6c6c6;"></div>
<div class="abs" style="left:226px;top:108px;width:1px;height:1px;background:#a4a4a4;"></div>
<div class="abs" style="left:225px;top:107px;width:1px;height:1px;background:#e6e6e6;"></div>
<div class="abs" style="left:226px;top:107px;width:1px;height:1px;background:#c6c6c6;"></div>
<div class="abs" style="left:225px;top:108px;width:1px;height:1px;background:#c6c6c6;"></div>
<svg class="abs" style="left:234px;top:90px" width="16" height="16" viewBox="0 0 16 16"><defs><radialGradient id="cg" cx=".5" cy=".62" r=".62"><stop offset="0" stop-color="#fff"/><stop offset=".62" stop-color="#f8fbff"/><stop offset="1" stop-color="#a8d0f8"/></radialGradient></defs><circle cx="8" cy="8" r="7.300" fill="url(#cg)" stroke="#5c90e2" stroke-width="1.200"/><circle cx="8" cy="8" r="6.500" fill="none" stroke="#9cc4f4" stroke-width=".7"/><path d="M8 8.300L11.600 3.600M8 8.300L5.200 8.900" stroke="#7070cc" stroke-width=".9" stroke-linecap="round" opacity=".85"/><path d="M7.400 6.400L10.400 12.800" stroke="#f49474" stroke-width=".9" stroke-linecap="round"/></svg>
<div class="abs" style="left:1006px;top:103px;width:5px;height:1px;background:#000;"></div>
<div class="abs" style="left:1007px;top:104px;width:3px;height:1px;background:#000;"></div>
<div class="abs" style="left:1008px;top:105px;width:1px;height:1px;background:#000;"></div>
<div class="abs" style="left:221px;top:112px;width:795px;height:401px;background:#fff;border:1px solid #828790;"></div>
<div class="abs" style="left:222px;top:113px;width:793px;height:35px;background:#a0a0a0;"></div>
<div class="abs" style="left:228px;top:121px;width:88px;height:19px;background:#fbfbfb;"></div>
<div class="t" style="left:230.70px;top:125.52px;font-size:11.2px;letter-spacing:0.107px;color:#000;">Категория</div>
<svg class="abs" style="left:302px;top:126px" width="7" height="8" viewBox="0 0 7 8"><path d="M3.500 .800L6.400 7.300H.600z" fill="#fff" stroke="#8a8a8a" stroke-width=".9"/></svg>
<div class="abs" style="left:222px;top:148px;width:264px;height:19px;background:#fcfcfc;"></div>
<div class="abs" style="left:222px;top:166px;width:264px;height:1px;background:#e0eaf6;"></div>
<div class="abs" style="left:233px;top:148px;width:1px;height:18px;background:#e4ecf4;"></div>
<div class="t" style="left:236.90px;top:152.52px;font-size:11.2px;letter-spacing:0.000px;color:#000;transform:scaleX(0.9324);transform-origin:0 0;">Наименование</div>
<svg class="abs" style="left:472px;top:153px" width="7" height="8" viewBox="0 0 7 8"><path d="M3.500 .800L6.400 7.300H.600z" fill="#fff" stroke="#8a8a8a" stroke-width=".9"/></svg>
<div class="abs" style="left:222px;top:167px;width:12px;height:198px;background:#f0f0f0;"></div>
<div class="abs" style="left:233px;top:167px;width:1px;height:198px;background:#a0a0a0;"></div>
<div class="abs" style="left:485px;top:167px;width:1px;height:198px;background:#a0a0a0;"></div>
<div class="abs" style="left:222px;top:184px;width:11px;height:1px;background:#a0a0a0;"></div>
<div class="abs" style="left:234px;top:167px;width:251px;height:17px;background:#f0f0f0;"></div>
<div class="abs" style="left:248px;top:184px;width:237px;height:1px;background:#a0a0a0;"></div>
<div class="abs" style="left:237px;top:171px;width:9px;height:9px;border:1px solid #9c9c9c;background:#fff"></div>
<div class="abs" style="left:239px;top:175px;width:5px;height:1px;background:#555;"></div>
<div class="t" style="left:250.40px;top:170.52px;font-size:11.2px;letter-spacing:0.182px;color:#000;">Категория</div>
<div class="t" style="left:306.55px;top:170.52px;font-size:11.2px;letter-spacing:0.000px;color:#000;transform:scaleX(1.2500);transform-origin:0 0;">:</div>
<div class="t" style="left:315.00px;top:170.52px;font-size:11.2px;letter-spacing:0.083px;color:#000;">Деньги</div>
<div class="t" style="left:355.40px;top:170.52px;font-size:11.2px;letter-spacing:0.000px;color:#000;transform:scaleX(0.8819);transform-origin:0 0;">(3)</div>
<div class="abs" style="left:222px;top:202px;width:11px;height:1px;background:#a0a0a0;"></div>
<div class="abs" style="left:234px;top:185px;width:14px;height:18px;background:#f0f0f0;"></div>
<div class="abs" style="left:248px;top:185px;width:1px;height:18px;background:#a0a0a0;"></div>
<div class="abs" style="left:249px;top:202px;width:236px;height:1px;background:#a0a0a0;"></div>
<div class="t" style="left:250.80px;top:188.52px;font-size:11.2px;letter-spacing:0.000px;color:#000;transform:scaleX(0.9309);transform-origin:0 0;">Вливание</div>
<div class="t" style="left:301.40px;top:188.52px;font-size:11.2px;letter-spacing:-0.073px;color:#000;">средств</div>
<div class="abs" style="left:222px;top:220px;width:11px;height:1px;background:#a0a0a0;"></div>
<div class="abs" style="left:234px;top:203px;width:14px;height:18px;background:#f0f0f0;"></div>
<div class="abs" style="left:248px;top:203px;width:1px;height:18px;background:#a0a0a0;"></div>
<div class="abs" style="left:249px;top:220px;width:236px;height:1px;background:#a0a0a0;"></div>
<div class="t" style="left:250.80px;top:206.52px;font-size:11.2px;letter-spacing:0.000px;color:#000;transform:scaleX(0.9530);transform-origin:0 0;">Выбытие</div>
<div class="t" style="left:299.60px;top:206.52px;font-size:11.2px;letter-spacing:-0.090px;color:#000;">средств</div>
<div class="abs" style="left:222px;top:238px;width:11px;height:1px;background:#a0a0a0;"></div>
<div class="abs" style="left:234px;top:221px;width:14px;height:18px;background:#f0f0f0;"></div>
<div class="abs" style="left:248px;top:221px;width:1px;height:18px;background:#a0a0a0;"></div>
<div class="abs" style="left:249px;top:238px;width:236px;height:1px;background:#a0a0a0;"></div>
<div class="t" style="left:250.80px;top:224.52px;font-size:11.2px;letter-spacing:-0.277px;color:#000;">Первоначальные</div>
<div class="t" style="left:340.30px;top:224.52px;font-size:11.2px;letter-spacing:0.000px;color:#000;transform:scaleX(1.0591);transform-origin:0 0;">остатки</div>
<div class="abs" style="left:222px;top:256px;width:11px;height:1px;background:#a0a0a0;"></div>
<div class="abs" style="left:234px;top:239px;width:251px;height:17px;background:#f0f0f0;"></div>
<div class="abs" style="left:248px;top:256px;width:237px;height:1px;background:#a0a0a0;"></div>
<div class="abs" style="left:234px;top:238px;width:251px;height:1px;background:#a0a0a0;"></div>
<div class="abs" style="left:237px;top:243px;width:9px;height:9px;border:1px solid #9c9c9c;background:#fff"></div>
<div class="abs" style="left:239px;top:247px;width:5px;height:1px;background:#555;"></div>
<div class="t" style="left:250.40px;top:242.52px;font-size:11.2px;letter-spacing:0.182px;color:#000;">Категория</div>
<div class="t" style="left:306.55px;top:242.52px;font-size:11.2px;letter-spacing:0.000px;color:#000;transform:scaleX(1.2500);transform-origin:0 0;">:</div>
<div class="t" style="left:315.00px;top:242.52px;font-size:11.2px;letter-spacing:0.000px;color:#000;transform:scaleX(0.9395);transform-origin:0 0;">Приход</div>
<div class="t" style="left:356.50px;top:242.52px;font-size:11.2px;letter-spacing:0.000px;color:#000;transform:scaleX(0.8962);transform-origin:0 0;">(1)</div>
<div class="abs" style="left:222px;top:274px;width:11px;height:1px;background:#a0a0a0;"></div>
<div class="abs" style="left:234px;top:257px;width:14px;height:18px;background:#f0f0f0;"></div>
<div class="abs" style="left:248px;top:257px;width:1px;height:18px;background:#a0a0a0;"></div>
<div class="abs" style="left:249px;top:274px;width:236px;height:1px;background:#a0a0a0;"></div>
<div class="t" style="left:250.80px;top:260.52px;font-size:11.2px;letter-spacing:0.000px;color:#000;transform:scaleX(0.9293);transform-origin:0 0;">Приход</div>
<div class="t" style="left:291.10px;top:260.52px;font-size:11.2px;letter-spacing:0.000px;color:#000;transform:scaleX(0.9667);transform-origin:0 0;">с</div>
<div class="t" style="left:300.00px;top:260.52px;font-size:11.2px;letter-spacing:-0.141px;color:#000;">продаж</div>
<div class="abs" style="left:222px;top:292px;width:11px;height:1px;background:#a0a0a0;"></div>
<div class="abs" style="left:234px;top:275px;width:251px;height:17px;background:#f0f0f0;"></div>
<div class="abs" style="left:248px;top:292px;width:237px;height:1px;background:#a0a0a0;"></div>
<div class="abs" style="left:234px;top:274px;width:251px;height:1px;background:#a0a0a0;"></div>
<div class="abs" style="left:237px;top:279px;width:9px;height:9px;border:1px solid #9c9c9c;background:#fff"></div>
<div class="abs" style="left:239px;top:283px;width:5px;height:1px;background:#555;"></div>
<div class="t" style="left:250.40px;top:278.52px;font-size:11.2px;letter-spacing:0.182px;color:#000;">Категория</div>
<div class="t" style="left:306.55px;top:278.52px;font-size:11.2px;letter-spacing:0.000px;color:#000;transform:scaleX(1.2500);transform-origin:0 0;">:</div>
<div class="t" style="left:315.00px;top:278.52px;font-size:11.2px;letter-spacing:-0.296px;color:#000;">Расходы</div>
<div class="t" style="left:362.20px;top:278.52px;font-size:11.2px;letter-spacing:0.000px;color:#000;transform:scaleX(0.9034);transform-origin:0 0;">(4)</div>
<div class="abs" style="left:222px;top:310px;width:11px;height:1px;background:#a0a0a0;"></div>
<div class="abs" style="left:234px;top:293px;width:14px;height:18px;background:#f0f0f0;"></div>
<div class="abs" style="left:248px;top:293px;width:1px;height:18px;background:#a0a0a0;"></div>
<div class="abs" style="left:249px;top:310px;width:236px;height:1px;background:#a0a0a0;"></div>
<div class="t" style="left:250.80px;top:296.52px;font-size:11.2px;letter-spacing:0.000px;color:#000;transform:scaleX(0.9416);transform-origin:0 0;">Аренда</div>
<div class="abs" style="left:222px;top:328px;width:11px;height:1px;background:#a0a0a0;"></div>
<div class="abs" style="left:234px;top:311px;width:14px;height:18px;background:#f0f0f0;"></div>
<div class="abs" style="left:248px;top:311px;width:1px;height:18px;background:#a0a0a0;"></div>
<div class="abs" style="left:249px;top:328px;width:236px;height:1px;background:#a0a0a0;"></div>
<div class="t" style="left:250.80px;top:314.52px;font-size:11.2px;letter-spacing:0.000px;color:#000;transform:scaleX(0.9485);transform-origin:0 0;">Зарплата</div>
<div class="abs" style="left:222px;top:346px;width:11px;height:1px;background:#a0a0a0;"></div>
<div class="abs" style="left:234px;top:329px;width:14px;height:18px;background:#f0f0f0;"></div>
<div class="abs" style="left:248px;top:329px;width:1px;height:18px;background:#a0a0a0;"></div>
<div class="abs" style="left:249px;top:346px;width:236px;height:1px;background:#a0a0a0;"></div>
<div class="t" style="left:250.80px;top:332.52px;font-size:11.2px;letter-spacing:0.000px;color:#000;transform:scaleX(0.9414);transform-origin:0 0;">Коммунальные</div>
<div class="t" style="left:328.70px;top:332.52px;font-size:11.2px;letter-spacing:0.047px;color:#000;">услуги</div>
<div class="abs" style="left:222px;top:364px;width:11px;height:1px;background:#a0a0a0;"></div>
<div class="abs" style="left:234px;top:347px;width:14px;height:18px;background:#f0f0f0;"></div>
<div class="abs" style="left:248px;top:347px;width:1px;height:18px;background:#a0a0a0;"></div>
<div class="abs" style="left:249px;top:364px;width:236px;height:1px;background:#a0a0a0;"></div>
<div class="t" style="left:250.80px;top:350.52px;font-size:11.2px;letter-spacing:0.000px;color:#000;transform:scaleX(0.9398);transform-origin:0 0;">Оплата</div>
<div class="t" style="left:291.80px;top:350.52px;font-size:11.2px;letter-spacing:-0.145px;color:#000;">поставщикам</div>
<div class="abs" style="left:234px;top:364px;width:251px;height:1px;background:#a0a0a0;"></div>
<svg class="abs" style="left:226px;top:333px" width="6" height="9" viewBox="0 0 6 9"><path d="M.300 0L5.300 4.500 .300 9z" fill="#000"/></svg>
<div class="abs" style="left:222px;top:488px;width:264px;height:2px;background:#8c8c8c;"></div>
<div class="abs" style="left:222px;top:490px;width:264px;height:22px;background:#f0f0f0;border-top:1px solid #fff;"></div>
<div class="abs" style="left:233px;top:490px;width:1px;height:21px;background:#9a9a9a;"></div>
<div class="abs" style="left:234px;top:490px;width:1px;height:21px;background:#fff;"></div>
<div class="abs" style="left:485px;top:488px;width:1px;height:24px;background:#9a9a9a;"></div>
<div class="abs" style="left:222px;top:511px;width:264px;height:1px;background:#8c8c8c;"></div>
<div class="abs" style="left:8px;top:514px;width:1008px;height:25px;background:#fff;"></div>
<div class="abs" style="left:8px;top:513px;width:1px;height:27px;background:#a8a8a8;"></div>
<div class="abs" style="left:146px;top:519px;width:870px;height:20px;background:#a9a9a9;"></div>
<div class="abs" style="left:146px;top:518px;width:1px;height:21px;background:#9c9c9c;"></div>
<div class="abs" style="left:8px;top:539px;width:1008px;height:1px;background:#a9a9a9;"></div>
<div class="abs" style="left:1013px;top:514px;width:1px;height:5px;background:#b0b0b0;"></div>
<svg class="abs" style="left:17px;top:522px" width="15" height="15" viewBox="0 0 15 15"><defs><linearGradient id="dg" x1="0" y1="0" x2="1" y2="1"><stop offset="0" stop-color="#fafafa"/><stop offset="1" stop-color="#dedede"/></linearGradient></defs><rect x="3.500" y=".500" width="11" height="14" fill="url(#dg)" stroke="#c4c4c4"/><rect x="1.200" y="0" width="2.600" height="15" fill="#c2602c"/><path d="M3.300 0v15" stroke="#a84c1c" stroke-width=".7"/><path d="M.2 1.500h2.400M.2 3.500h2.400M.2 5.500h2.400M.2 7.500h2.400M.2 9.500h2.400M.2 11.500h2.400M.2 13.500h2.400" stroke="#f0dccc" stroke-width=".9"/><rect x="6.500" y="4" width="5.500" height="2.500" fill="#6a9ae4"/><rect x="6.500" y="8" width="5.500" height="1" fill="#6a9ae4"/></svg>
<div class="t" style="left:38.00px;top:524.52px;font-size:11.2px;letter-spacing:0.000px;color:#000;transform:scaleX(0.9547);transform-origin:0 0;">Финансовые</div>
<div class="t" style="left:103.90px;top:524.52px;font-size:11.2px;letter-spacing:0.156px;color:#000;">статьи</div>
<div class="abs" style="left:8px;top:540px;width:1008px;height:20px;background:#f0f0f0;"></div>
<svg class="abs" style="left:9.5px;top:542.5px" width="15" height="15" viewBox="0 0 16 16"><defs><radialGradient id="ig" cx=".42" cy=".3" r=".8"><stop offset="0" stop-color="#8cb8f6"/><stop offset=".5" stop-color="#3d78da"/><stop offset="1" stop-color="#2252b4"/></radialGradient></defs><ellipse cx="8" cy="13.800" rx="6.200" ry="1.900" fill="#8e8e8e" opacity=".55"/><circle cx="8" cy="7.200" r="6.500" fill="url(#ig)"/><ellipse cx="8" cy="3.700" rx="4.400" ry="2.500" fill="#fff" opacity=".28"/><rect x="6.900" y="3.300" width="2.200" height="2" rx=".4" fill="#fff"/><rect x="6.900" y="6.500" width="2.200" height="4.600" rx=".4" fill="#fff"/></svg>
<div class="t" style="left:32.60px;top:545.52px;font-size:11.2px;letter-spacing:0.138px;color:#000;">2.0.923.10</div>
<svg class="abs" style="left:97px;top:543px" width="17" height="16" viewBox="0 0 17 16"><defs><linearGradient id="tw" x1="0" y1="0" x2="1" y2="0"><stop offset="0" stop-color="#8c8c8c"/><stop offset=".55" stop-color="#dadada"/><stop offset="1" stop-color="#9a9a9a"/></linearGradient></defs><path d="M.600 2.200L5.500 .500 9 1.800V13L5.500 14.600 .600 12.800z" fill="url(#tw)" stroke="#6e6e6e" stroke-width=".8"/><path d="M5.500 .500V14.600" stroke="#7a7a7a" stroke-width=".6"/><path d="M1.500 3.800l3.200-.8M1.500 5.600l3.200-.7M1.500 7.400l3.200-.6" stroke="#f0f0f0" stroke-width=".7"/><circle cx="6.300" cy="12.300" r=".8" fill="#3cc03c"/><rect x="8.200" y="5.200" width="8.200" height="7" rx=".8" fill="#34a8f8" stroke="#1c84d8" stroke-width=".8"/><path d="M9 6h6.600v2.600H9z" fill="#90d4ff" opacity=".75"/><ellipse cx="13" cy="14.300" rx="2.800" ry="1.200" fill="#9a9a9a"/><rect x="12.300" y="12.200" width="1.400" height="1.800" fill="#8a8a8a"/></svg>
<div class="t" style="left:120.50px;top:545.52px;font-size:11.2px;letter-spacing:0.000px;color:#000;transform:scaleX(0.9368);transform-origin:0 0;">localhost</div>
<svg class="abs" style="left:174px;top:542.5px" width="15" height="15.5" viewBox="0 0 16 16"><path d="M.800 15.200V11.800Q.800 11 1.600 10.700L5.600 9.300H10.400L14.400 10.700Q15.200 11 15.200 11.800V15.200Z" fill="#e2e6f8" stroke="#4a4cb0" stroke-width="1.100"/><path d="M2 13.200h12" stroke="#fff" stroke-width="1.200" opacity=".8"/><path d="M5.600 9.300L8 11l2.400-1.700" fill="#c8d0f4" stroke="#8088d0" stroke-width=".5"/><ellipse cx="8" cy="5.800" rx="3.300" ry="4" fill="#fde2bc" stroke="#e0a868" stroke-width=".5"/><path d="M4.200 6.800C3.200 3 5 .300 8 .300c3.400 0 5 2.700 3.900 6.200C11.200 4.800 9.800 3.600 7.600 2.800 6.800 4.200 5.400 5 4.200 6.800z" fill="#b47c1c"/><path d="M6 1.200c1.500-.6 3.200-.4 4.400.8" stroke="#d8a040" stroke-width=".7" fill="none"/></svg>
<div class="t" style="left:196.60px;top:545.52px;font-size:11.2px;letter-spacing:0.000px;color:#000;transform:scaleX(0.8122);transform-origin:0 0;">SYSDBA</div>
<div class="t" style="left:238.20px;top:545.52px;font-size:11.2px;letter-spacing:0.000px;color:#000;transform:scaleX(0.9133);transform-origin:0 0;">(MAIN)</div>
<svg class="abs" style="left:283px;top:543.5px" width="14" height="14" viewBox="0 0 14 14"><rect x=".500" y="1.600" width="13" height="12" fill="#e8b454" stroke="#8e8e8e" stroke-width="1"/><rect x="1" y="2" width="12" height="3.600" fill="#3cc43c"/><rect x="1" y="5.500" width="12" height=".9" fill="#f4f4f4"/><g fill="#fff"><rect x="2" y="7.400" width="1" height="1"/><rect x="4.200" y="7.400" width="1" height="1"/><rect x="6.400" y="7.400" width="1" height="1"/><rect x="8.600" y="7.400" width="1" height="1"/><rect x="10.800" y="7.400" width="1" height="1"/><rect x="2" y="9.400" width="1" height="1"/><rect x="4.200" y="9.400" width="1" height="1"/><rect x="6.400" y="9.400" width="1" height="1"/><rect x="10.800" y="9.400" width="1" height="1"/><rect x="2" y="11.400" width="1" height="1"/><rect x="4.200" y="11.400" width="1" height="1"/><rect x="6.400" y="11.400" width="1.600" height="1"/><rect x="8.600" y="11.400" width="1" height="1"/><rect x="10.800" y="11.400" width="1" height="1"/></g><rect x="7.800" y="8.300" width="3.200" height="3.200" fill="#1a70e0"/><rect x="8.900" y="9.400" width="1" height="1" fill="#fff"/><ellipse cx="2.600" cy="1.800" rx=".9" ry="1.700" fill="#f0f0f0" stroke="#787878" stroke-width=".6"/><ellipse cx="11.400" cy="1.800" rx=".9" ry="1.700" fill="#f0f0f0" stroke="#787878" stroke-width=".6"/></svg>
<div class="t" style="left:306.30px;top:545.52px;font-size:11.2px;letter-spacing:-0.074px;color:#000;">27.07.2016</div>
<div class="t" style="left:381.80px;top:545.52px;font-size:11.2px;letter-spacing:0.091px;color:#000;">00:00:00:181</div>
<div class="abs" style="left:95px;top:542px;width:1px;height:17px;background:#d0d0d0;"></div>
<div class="abs" style="left:96px;top:542px;width:1px;height:17px;background:#fafafa;"></div>
<div class="abs" style="left:171px;top:542px;width:1px;height:17px;background:#d0d0d0;"></div>
<div class="abs" style="left:172px;top:542px;width:1px;height:17px;background:#fafafa;"></div>
<div class="abs" style="left:280px;top:542px;width:1px;height:17px;background:#d0d0d0;"></div>
<div class="abs" style="left:281px;top:542px;width:1px;height:17px;background:#fafafa;"></div>
<div class="abs" style="left:370px;top:542px;width:1px;height:17px;background:#d0d0d0;"></div>
<div class="abs" style="left:371px;top:542px;width:1px;height:17px;background:#fafafa;"></div>
<div class="abs" style="left:460px;top:542px;width:1px;height:17px;background:#d0d0d0;"></div>
<div class="abs" style="left:461px;top:542px;width:1px;height:17px;background:#fafafa;"></div>
<div class="abs" style="left:1005px;top:556px;width:2px;height:2px;background:#bdbdbd;"></div>
<div class="abs" style="left:1008px;top:553px;width:2px;height:2px;background:#bdbdbd;"></div>
<div class="abs" style="left:1011px;top:550px;width:2px;height:2px;background:#bdbdbd;"></div>
<div class="abs" style="left:1008px;top:556px;width:2px;height:2px;background:#bdbdbd;"></div>
<div class="abs" style="left:1011px;top:553px;width:2px;height:2px;background:#bdbdbd;"></div>
<div class="abs" style="left:1011px;top:556px;width:2px;height:2px;background:#bdbdbd;"></div>
</body>
</html>
